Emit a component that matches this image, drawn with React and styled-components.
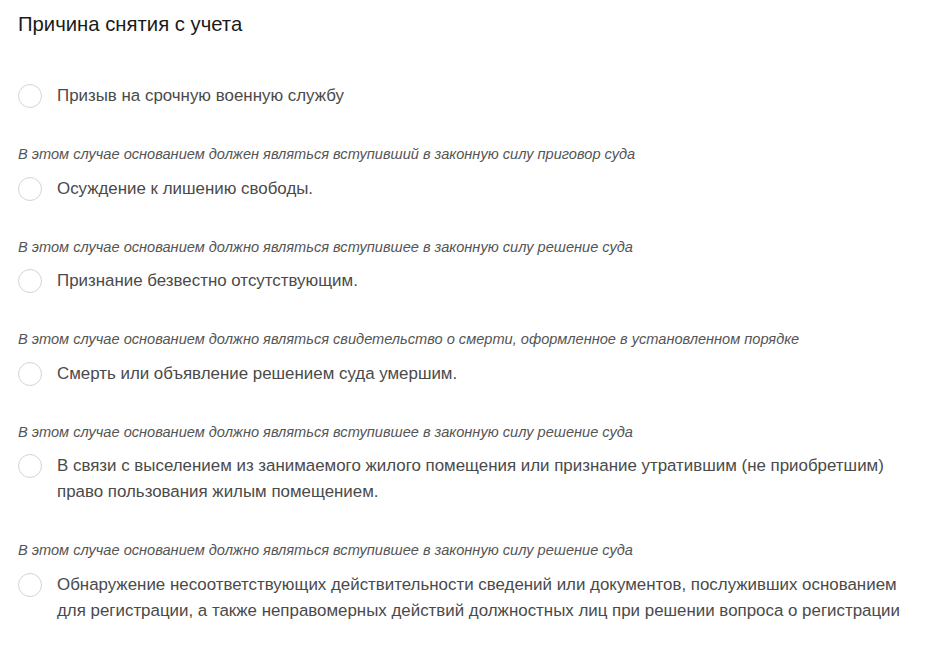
import styled, { createGlobalStyle } from "styled-components"

const GlobalStyle = createGlobalStyle`
  body {
    margin: 0;
    background: #fff;
    font-family: "Liberation Sans", Arial, sans-serif;
  }
`

const Page = styled.div`
  width: 904px;
  padding: 12px 0 0 18px;
`

const Title = styled.h2`
  margin: 0;
  font-size: 20.3px;
  line-height: 24px;
  font-weight: 400;
  color: #1a1a1a;
`

const List = styled.div`
  display: flex;
  flex-direction: column;
  padding-top: 47px;
`

const Group = styled.div`
  display: flex;
  flex-direction: column;
  gap: 12.5px;
  margin-top: ${props => (props.first ? "0" : "36px")};
`

const Hint = styled.div`
  font-size: 14.6px;
  font-style: italic;
  line-height: 18px;
  color: #555;
`

const Option = styled.label`
  display: flex;
  align-items: flex-start;
  gap: 15px;
  cursor: pointer;
`

const Radio = styled.span`
  flex: none;
  box-sizing: border-box;
  width: 24px;
  height: 24px;
  margin-top: 1px;
  border: 1.5px solid #d4d4d4;
  border-radius: 50%;
  background: #fff;
`

const Text = styled.span`
  font-size: 16.9px;
  line-height: 26px;
  color: #4a4a4a;
`

const reasons = [
  { text: "Призыв на срочную военную службу" },
  {
    hint: "В этом случае основанием должен являться вступивший в законную силу приговор суда",
    text: "Осуждение к лишению свободы.",
  },
  {
    hint: "В этом случае основанием должно являться вступившее в законную силу решение суда",
    text: "Признание безвестно отсутствующим.",
  },
  {
    hint: "В этом случае основанием должно являться свидетельство о смерти, оформленное в установленном порядке",
    text: "Смерть или объявление решением суда умершим.",
  },
  {
    hint: "В этом случае основанием должно являться вступившее в законную силу решение суда",
    text: "В связи с выселением из занимаемого жилого помещения или признание утратившим (не приобретшим) право пользования жилым помещением.",
  },
  {
    hint: "В этом случае основанием должно являться вступившее в законную силу решение суда",
    text: "Обнаружение несоответствующих действительности сведений или документов, послуживших основанием для регистрации, а также неправомерных действий должностных лиц при решении вопроса о регистрации",
  },
]

const App = () => {
  return (
    <>
      <GlobalStyle />
      <Page>
        <Title>Причина снятия с учета</Title>
        <List>
          {reasons.map((r, i) => (
            <Group key={i} first={i === 0}>
              {r.hint && <Hint>{r.hint}</Hint>}
              <Option>
                <Radio />
                <Text>{r.text}</Text>
              </Option>
            </Group>
          ))}
        </List>
      </Page>
    </>
  )
}

export default App
